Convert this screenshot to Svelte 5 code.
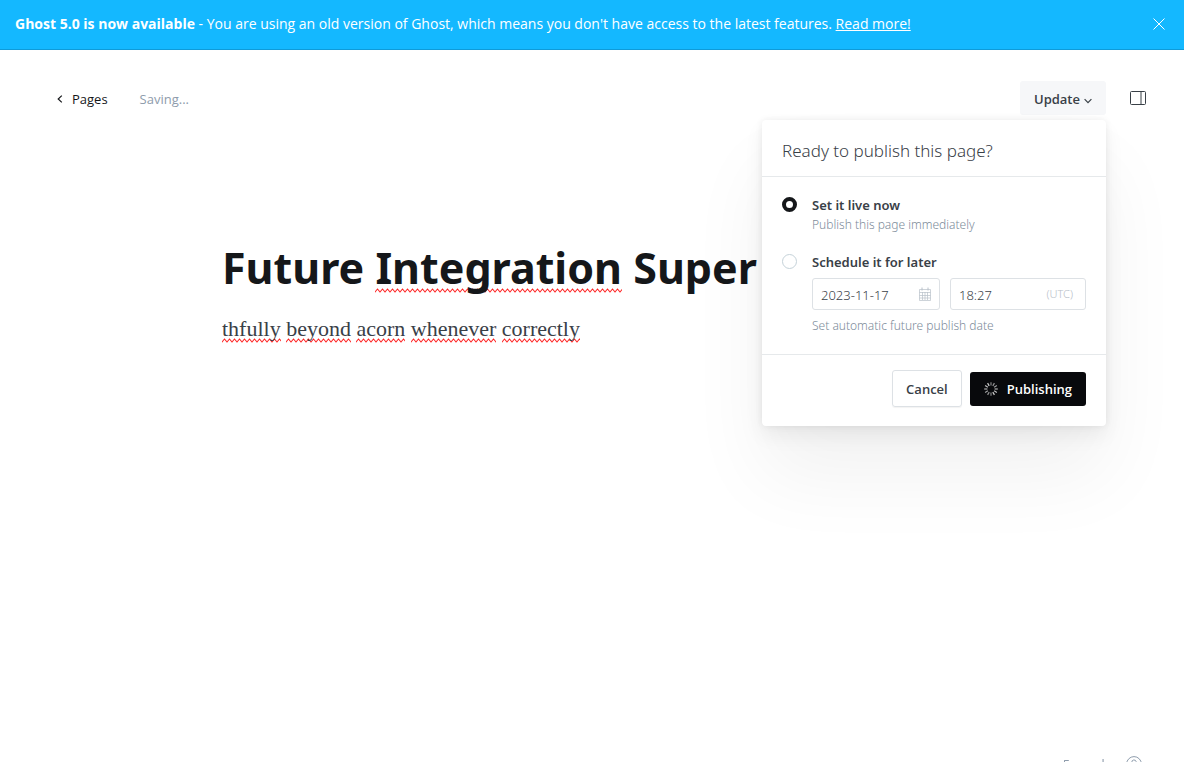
<script>
  let publishMode = $state('now');
  let date = $state('2023-11-17');
  let time = $state('18:27');
  const bodyWords = ['thfully', 'beyond', 'acorn', 'whenever', 'correctly'];
  const spokes = Array.from({ length: 12 }, (_, i) => i);
</script>

<div class="app">
  <aside class="banner">
    <p><strong>Ghost 5.0 is now available</strong> - You are using an old version of Ghost, which means you don't have access to the latest features. <a href="#upgrade">Read more!</a></p>
    <button class="close" aria-label="Close">
      <svg width="14" height="14" viewBox="0 0 14 14"><path d="M1.5 1.5l11 11M12.5 1.5l-11 11" fill="none" stroke="currentColor" stroke-width="1" /></svg>
    </button>
  </aside>

  <header class="toolbar">
    <nav class="crumbs">
      <a href="#pages">
        <svg width="6" height="8" viewBox="0 0 6 8"><path d="M4.8 .6L1.2 4l3.6 3.4" fill="none" stroke="currentColor" stroke-width="1.2" /></svg>
        Pages
      </a>
      <span class="status">Saving...</span>
    </nav>

    <div class="actions">
      <div class="publish">
        <button class="update" aria-expanded="true">
          Update
          <svg width="8" height="6" viewBox="0 0 8 6"><path d="M.6 1.1L4 4.6l3.4-3.5" fill="none" stroke="currentColor" stroke-width="1.2" /></svg>
        </button>

        <form class="menu">
          <h2>Ready to publish this page?</h2>
          <div class="options">
            <div class="option">
              <input type="radio" id="mode-now" name="mode" value="now" bind:group={publishMode} />
              <div class="detail">
                <label for="mode-now">Set it live now</label>
                <p>Publish this page immediately</p>
              </div>
            </div>
            <div class="option">
              <input type="radio" id="mode-later" name="mode" value="later" bind:group={publishMode} />
              <div class="detail">
                <label for="mode-later">Schedule it for later</label>
                <div class="when">
                  <div class="field date">
                    <input type="text" aria-label="Date" bind:value={date} />
                    <svg width="12" height="14" viewBox="0 0 12 14" fill="none" stroke="currentColor">
                      <path d="M.5 2.5h11v11H.5zM.5 5.5h11M.5 8.5h11M.5 11h11M3.5 5v8M6 5v8M8.5 5v8" stroke-width=".7" />
                      <path d="M3 .5v3M9 .5v3" />
                    </svg>
                  </div>
                  <div class="field time">
                    <input type="text" aria-label="Time" bind:value={time} />
                    <span>(UTC)</span>
                  </div>
                </div>
                <p>Set automatic future publish date</p>
              </div>
            </div>
          </div>
          <footer>
            <button type="button" class="cancel">Cancel</button>
            <button type="button" class="primary">
              <svg width="14" height="14" viewBox="0 0 14 14" stroke="#fff" stroke-width="1.2">
                {#each spokes as i}
                  <path d="M7 .2v3.200" transform="rotate({i * 30} 7 7)" opacity={0.5 + (i % 6) * 0.06} />
                {/each}
              </svg>
              Publishing
            </button>
          </footer>
        </form>
      </div>

      <button class="sidebar" aria-label="Settings">
        <svg width="16" height="14" viewBox="0 0 16 14" fill="none" stroke="currentColor"><rect x=".5" y=".5" width="15" height="13" rx="1" /><path d="M11 .5v13" /></svg>
      </button>
    </div>
  </header>

  <main>
    <h1>Future <span class="typo">Integration</span> Super</h1>
    <p class="body">{#each bodyWords as word, i}{i ? ' ' : ''}<span class="typo">{word}</span>{/each}</p>
  </main>

  <div class="count">
    <span>{bodyWords.length} words</span>
    <svg width="16" height="16" viewBox="0 0 16 16" fill="none" stroke="currentColor"><circle cx="8" cy="8" r="7.4" /><path d="M5.8 6.2a2.2 2.2 0 1 1 3 2c-.6.3-.8.6-.8 1.300M8 11v1" /></svg>
  </div>
</div>

<style>
  :global(body) {
    margin: 0;
    background: #fff;
  }
  .app {
    min-height: 100vh;
    box-sizing: border-box;
    overflow: hidden;
    color: #394047;
    font: 13px/20px 'Open Sans', 'Noto Sans', sans-serif;
  }
  button, input {
    font: inherit;
    color: inherit;
  }
  button {
    margin: 0;
    padding: 0;
    border: 0;
    background: none;
  }
  svg {
    display: block;
    flex: none;
  }
  p, h1, h2 {
    margin: 0;
  }
  .banner {
    display: flex;
    align-items: center;
    justify-content: space-between;
    box-sizing: border-box;
    min-height: 50px;
    padding: 0 18px 1px 15px;
    border-bottom: 1px solid #0f9bd9;
    background: #14b8ff;
    color: #fff;
    font-size: 14px;
  }
  .banner a {
    color: inherit;
    text-decoration: underline;
  }
  .toolbar {
    display: flex;
    justify-content: space-between;
    padding: 31px 38px 0 57px;
  }
  .crumbs, .crumbs a, .actions {
    display: flex;
    align-items: center;
  }
  .crumbs {
    gap: 32px;
    height: 36px;
  }
  .crumbs a {
    gap: 9px;
    color: #15171a;
    text-decoration: none;
    font-weight: 500;
  }
  .status {
    color: #8e9cac;
  }
  .actions {
    gap: 24px;
    height: 34px;
  }
  .publish {
    position: relative;
  }
  .update {
    display: flex;
    align-items: center;
    justify-content: center;
    gap: 4px;
    box-sizing: border-box;
    width: 86px;
    height: 34px;
    padding-top: 2px;
    border-radius: 3px;
    background: #f6f7f9;
    font-weight: 600;
  }
  .update svg {
    margin-top: 4px;
  }
  .menu {
    position: absolute;
    top: calc(100% + 5px);
    right: 0;
    z-index: 2;
    width: 344px;
    border-radius: 4px;
    background: #fff;
    box-shadow: 0 0 7px rgba(0, 0, 0, .07), 0 10px 20px rgba(0, 0, 0, .06), 0 50px 80px rgba(0, 0, 0, .055);
    font-family: 'Noto Sans', sans-serif;
  }
  h2 {
    padding: 20px 20px 14px;
    border-bottom: 1px solid #e6e9eb;
    font-size: 17px;
    line-height: 22px;
    font-weight: 300;
  }
  .options {
    display: grid;
    gap: 17px;
    padding: 18px 20px 18px;
  }
  .option {
    display: flex;
    gap: 15px;
  }
  .option > input {
    appearance: none;
    flex: none;
    box-sizing: border-box;
    width: 15px;
    height: 15px;
    margin: 2px 0 0;
    border: 1px solid #c5d2d9;
    border-radius: 50%;
    background: #fff;
  }
  .option > input:checked {
    border: 4px solid #15171a;
  }
  .detail {
    flex: 1;
    min-width: 0;
  }
  .detail label {
    display: block;
    font-weight: 600;
  }
  .detail p {
    color: #7c8b9a;
    font-size: 12px;
    font-weight: 300;
  }
  .when {
    display: grid;
    grid-template-columns: 128fr 136fr;
    gap: 10px;
    padding: 6px 0 6px;
  }
  .field {
    display: flex;
    align-items: center;
    box-sizing: border-box;
    height: 32px;
    padding: 0 8px;
    border: 1px solid #dde1e5;
    border-radius: 3px;
    color: #b8c0c9;
  }
  .time {
    padding-right: 12px;
    font-size: 11px;
    font-weight: 300;
  }
  .field input {
    flex: 1;
    width: 0;
    min-width: 0;
    padding: 2px 0 0;
    border: 0;
    outline: 0;
    background: none;
    color: #394047;
    font-size: 13px;
    font-weight: 300;
  }
  .menu footer {
    display: flex;
    justify-content: flex-end;
    align-items: center;
    gap: 8px;
    padding: 15px 20px 19px;
    border-top: 1px solid #e6e9eb;
    font-family: 'Open Sans', sans-serif;
    font-weight: 600;
  }
  .cancel {
    height: 37px;
    padding: 0 13px;
    border: 1px solid #dde1e5;
    border-radius: 3px;
    box-shadow: 0 1px 1px rgba(0, 0, 0, .05);
  }
  .primary {
    display: flex;
    align-items: center;
    gap: 9px;
    height: 34px;
    padding: 0 14px;
    border-radius: 3px;
    background: #08090c;
    color: #fff;
  }
  main {
    max-width: 740px;
    margin: 0 auto;
    padding: 121px 0 0;
  }
  h1 {
    color: #15171a;
    font-family: 'Noto Sans', sans-serif;
    font-size: 43px;
    line-height: 60px;
    font-weight: 700;
    white-space: nowrap;
  }
  .body {
    padding-top: 15px;
    font: 22px/32px 'Liberation Serif', serif;
  }
  .typo {
    padding-bottom: 2px;
    background: url("data:image/svg+xml,%3Csvg xmlns='http://www.w3.org/2000/svg' width='5' height='5'%3E%3Cpath d='M-1 3L0 4L2.500 1L5 4L6 3' fill='none' stroke='%23f22' stroke-width='1.1'/%3E%3C/svg%3E") repeat-x left bottom;
  }
  h1 .typo {
    background-position: left bottom 6px;
  }
  .count {
    position: fixed;
    right: 42px;
    bottom: -12px;
    display: flex;
    align-items: center;
    gap: 15px;
    color: #8e9cac;
  }
</style>
